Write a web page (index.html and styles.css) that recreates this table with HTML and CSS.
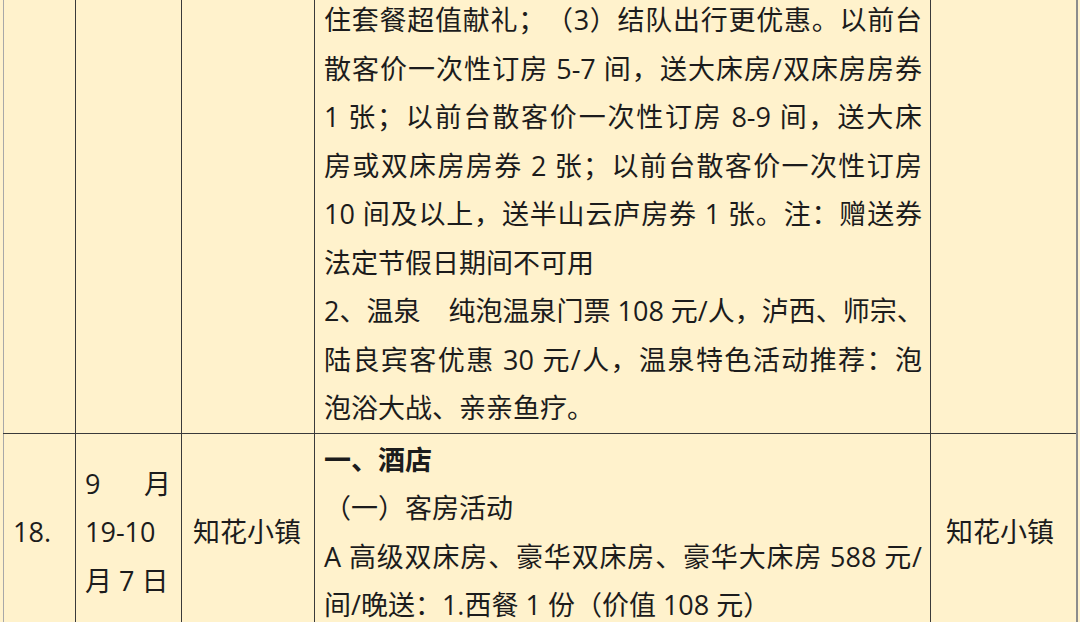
FILE: index.html
```html
<!DOCTYPE html>
<html lang="zh-CN">
<head>
<meta charset="utf-8">
<title>活动表</title>
<link rel="stylesheet" href="styles.css">
</head>
<body>
<table class="sched">
  <colgroup>
    <col class="c-no">
    <col class="c-date">
    <col class="c-place">
    <col class="c-detail">
    <col class="c-org">
  </colgroup>
  <tr class="row-cont">
    <td class="cell"></td>
    <td class="cell"></td>
    <td class="cell"></td>
    <td class="cell detail detail-cont">
      <div class="ln">住套餐超值献礼；（3）结队出行更优惠。以前台</div>
      <div class="ln">散客价一次性订房 5-7 间，送大床房/双床房房券</div>
      <div class="ln">1 张；以前台散客价一次性订房 8-9 间，送大床</div>
      <div class="ln">房或双床房房券 2 张；以前台散客价一次性订房</div>
      <div class="ln">10 间及以上，送半山云庐房券 1 张。注：赠送券</div>
      <div class="ln ln-end">法定节假日期间不可用</div>
      <div class="ln">2、温泉&nbsp;&nbsp;&nbsp;&nbsp;纯泡温泉门票 108 元/人，泸西、师宗、</div>
      <div class="ln">陆良宾客优惠 30 元/人，温泉特色活动推荐：泡</div>
      <div class="ln ln-end">泡浴大战、亲亲鱼疗。</div>
    </td>
    <td class="cell"></td>
  </tr>
  <tr class="row-18">
    <td class="cell no">18.</td>
    <td class="cell date">
      <div class="ln">9 月</div>
      <div class="ln ln-end">19-10</div>
      <div class="ln ln-end">月 7 日</div>
    </td>
    <td class="cell place">知花小镇</td>
    <td class="cell detail detail-18">
      <div class="ln ln-end head">一、酒店</div>
      <div class="ln ln-end">（一）客房活动</div>
      <div class="ln">A 高级双床房、豪华双床房、豪华大床房 588 元/</div>
      <div class="ln ln-end">间/晚送：1.西餐 1 份（价值 108 元）</div>
    </td>
    <td class="cell org">知花小镇</td>
  </tr>
</table>
</body>
</html>
```
FILE: styles.css
```css
html, body {
  margin: 0;
  padding: 0;
  background: #fff2cc;
  overflow: hidden;
}

body {
  width: 1080px;
  height: 622px;
  font-family: "Open Sans", "Noto Sans CJK SC", sans-serif;
  font-size: 27px;
  color: #1c1c1c;
  text-spacing-trim: space-all;
}

.sched {
  border-collapse: collapse;
  table-layout: fixed;
  width: 1073px;
  margin: -7px 0 0 3px;
}

.c-no { width: 72px; }
.c-date { width: 106px; }
.c-place { width: 133px; }
.c-detail { width: 616px; }
.c-org { width: 146px; }

.cell {
  border: 1px solid #3a3a3a;
  padding: 2px 8px 2px 9px;
  line-height: 48.5px;
  vertical-align: middle;
}

.cell:first-child {
  border-left-color: #a8a8a8;
}

.cell:last-child {
  border-right: 2px solid #8c8c8c;
}

.detail-cont {
  padding-top: 2px;
  padding-bottom: 0;
}

.ln {
  text-align: justify;
  text-align-last: justify;
  white-space: nowrap;
}

.ln-end {
  text-align: left;
  text-align-last: left;
}

.head {
  font-weight: 700;
}

.date {
  padding-right: 10px;
}

.place {
  padding-left: 11px;
}

.org {
  padding-left: 15px;
}
```
